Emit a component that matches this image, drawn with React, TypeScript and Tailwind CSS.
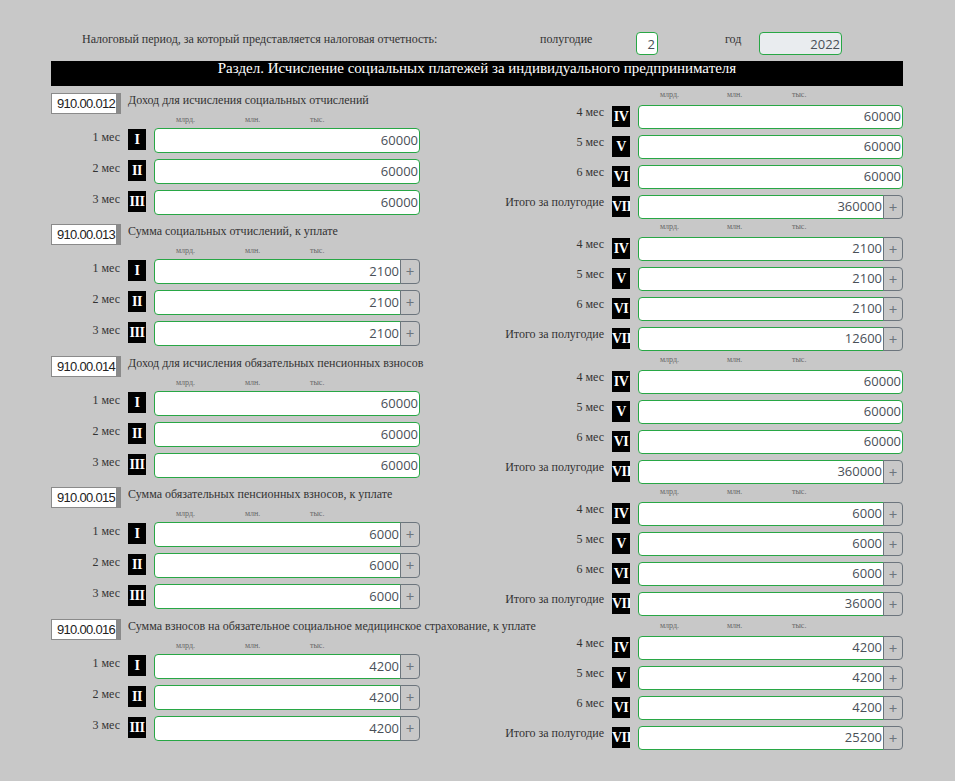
import React from "react";

type Row = { label: string; num: string; value: string; plus?: boolean };

type Block = {
  code: string;
  title: string;
  left: Row[];
  right: Row[];
  leftH: string;
  rightH: string;
};

const mk = (
  vals: [string, string, string, string, string, string, string],
  leftPlus: boolean,
  rightPlus: boolean,
): { left: Row[]; right: Row[] } => ({
  left: [
    { label: "1 мес", num: "I", value: vals[0], plus: leftPlus },
    { label: "2 мес", num: "II", value: vals[1], plus: leftPlus },
    { label: "3 мес", num: "III", value: vals[2], plus: leftPlus },
  ],
  right: [
    { label: "4 мес", num: "IV", value: vals[3], plus: rightPlus },
    { label: "5 мес", num: "V", value: vals[4], plus: rightPlus },
    { label: "6 мес", num: "VI", value: vals[5], plus: rightPlus },
    { label: "Итого за полугодие", num: "VII", value: vals[6], plus: true },
  ],
});

const blocks: Block[] = [
  {
    code: "910.00.012",
    title: "Доход для исчисления социальных отчислений",
    ...mk(["60000", "60000", "60000", "60000", "60000", "60000", "360000"], false, false),
    leftH: "h-[131px]",
    rightH: "h-[132px]",
  },
  {
    code: "910.00.013",
    title: "Сумма социальных отчислений, к уплате",
    ...mk(["2100", "2100", "2100", "2100", "2100", "2100", "12600"], true, true),
    leftH: "h-[132px]",
    rightH: "h-[133px]",
  },
  {
    code: "910.00.014",
    title: "Доход для исчисления обязательных пенсионных взносов",
    ...mk(["60000", "60000", "60000", "60000", "60000", "60000", "360000"], false, false),
    leftH: "h-[131px]",
    rightH: "h-[132px]",
  },
  {
    code: "910.00.015",
    title: "Сумма обязательных пенсионных взносов, к уплате",
    ...mk(["6000", "6000", "6000", "6000", "6000", "6000", "36000"], true, true),
    leftH: "h-[132px]",
    rightH: "h-[134px]",
  },
  {
    code: "910.00.016",
    title: "Сумма взносов на обязательное социальное медицинское страхование, к уплате",
    ...mk(["4200", "4200", "4200", "4200", "4200", "4200", "25200"], true, true),
    leftH: "h-[132px]",
    rightH: "h-[132px]",
  },
];

// --- small pieces ---
const Badge = ({ num }: { num: string }) => (
  <div className="ml-2 mt-px h-[21px] w-[18px] shrink-0 overflow-hidden whitespace-nowrap bg-black text-center font-['Liberation_Serif',serif] text-[14px] font-bold leading-[21px] tracking-[-0.5px] text-white">
    {num}
  </div>
);

const Field = ({ value, plus, wide }: { value: string; plus?: boolean; wide?: boolean }) => (
  <div className={wide ? "ml-2 flex h-full flex-1" : "ml-2 flex h-full w-[265px]"}>
    <div
      className={
        "flex flex-1 items-center justify-end border border-[#28a745] bg-white pr-px font-['Open_Sans',sans-serif] text-[13px] text-[#495057] " +
        (plus ? "rounded-l-[4px]" : "rounded-[4px]")
      }
    >
      {value}
    </div>
    {plus && (
      <div className="-ml-px flex w-[20px] items-center justify-center rounded-r-[4px] border border-[#6c757d] font-['Open_Sans',sans-serif] text-[15px] text-[#6c757d]">
        +
      </div>
    )}
  </div>
);

const Units = ({ className, first }: { className: string; first: string }) => (
  <div className={"flex font-['Liberation_Serif',serif] text-[8px] text-[#666] " + className}>
    <span className={first}>млрд.</span>
    <span className="w-[65px]">млн.</span>
    <span>тыс.</span>
  </div>
);

const LeftSection = ({ b }: { b: Block }) => (
  <div className={b.leftH}>
    <div className="flex h-[21px]">
      <div className="flex w-[70px] shrink-0 items-center border border-[#8a8a8a] border-r-[5px] bg-white pl-[5px] font-['Liberation_Sans',sans-serif] text-[13px] tracking-[-0.7px] text-[#222]">
        {b.code}
      </div>
      <div className="ml-[7px] whitespace-nowrap font-['Liberation_Serif',serif] text-[12px] leading-[15px] text-[#333]">
        {b.title}
      </div>
    </div>
    <Units className="h-[14px] pl-[125px] pt-px leading-[10px]" first="w-[69px]" />
    <div className="flex flex-col gap-[6px]">
      {b.left.map((r) => (
        <div key={r.num} className="flex h-[25px]">
          <div className="w-[69px] shrink-0 text-right font-['Liberation_Serif',serif] text-[12px] leading-[19px] text-[#333]">
            {r.label}
          </div>
          <Badge num={r.num} />
          <Field value={r.value} plus={r.plus} wide />
        </div>
      ))}
    </div>
  </div>
);

const RightSection = ({ b }: { b: Block }) => (
  <div className={b.rightH}>
    <Units className="h-[12px] pl-[240px] leading-[4px]" first="w-[67px]" />
    <div className="flex flex-col gap-[6px]">
      {b.right.map((r) => (
        <div key={r.num} className="flex h-[24px]">
          <div className="flex-1 whitespace-nowrap text-right font-['Liberation_Serif',serif] text-[12px] leading-[14px] text-[#333]">
            {r.label}
          </div>
          <Badge num={r.num} />
          <Field value={r.value} plus={r.plus} />
        </div>
      ))}
    </div>
  </div>
);

export default function App() {
  return (
    <div className="min-h-[781px] w-full bg-[#c8c8c8] pt-[32px]">
      <div className="ml-[51px] w-[852px]">
        {/* header: period */}
        <div className="flex h-[23px] items-start font-['Liberation_Serif',serif] text-[12px] leading-[15px] text-[#333]">
          <span className="ml-[31px] w-[458px] whitespace-nowrap">
            Налоговый период, за который представляется налоговая отчетность:
          </span>
          <span className="w-[96px]">полугодие</span>
          <div className="flex h-[23px] w-[22px] items-center justify-end rounded-[4px] border border-[#28a745] bg-white pr-[2px] pt-[2px] font-['Open_Sans',sans-serif] text-[13px] text-[#495057]">
            2
          </div>
          <span className="ml-[67px] w-[34px]">год</span>
          <div className="flex h-[23px] w-[83px] items-center justify-end rounded-[4px] border border-[#28a745] bg-[#e9ecef] pr-px pt-[2px] font-['Open_Sans',sans-serif] text-[13px] text-[#495057]">
            2022
          </div>
        </div>

        {/* section title */}
        <div className="mt-[6px] h-[25px] bg-black text-center font-['Liberation_Serif',serif] text-[15px] leading-[14px] text-white">
          Раздел. Исчисление социальных платежей за индивидуального предпринимателя
        </div>

        {/* body: two columns */}
        <div className="mt-[7px] flex">
          <div className="w-[369px] shrink-0">
            {blocks.map((b) => (
              <LeftSection key={b.code} b={b} />
            ))}
          </div>
          <div className="flex-1">
            {blocks.map((b) => (
              <RightSection key={b.code} b={b} />
            ))}
          </div>
        </div>
      </div>
    </div>
  );
}
